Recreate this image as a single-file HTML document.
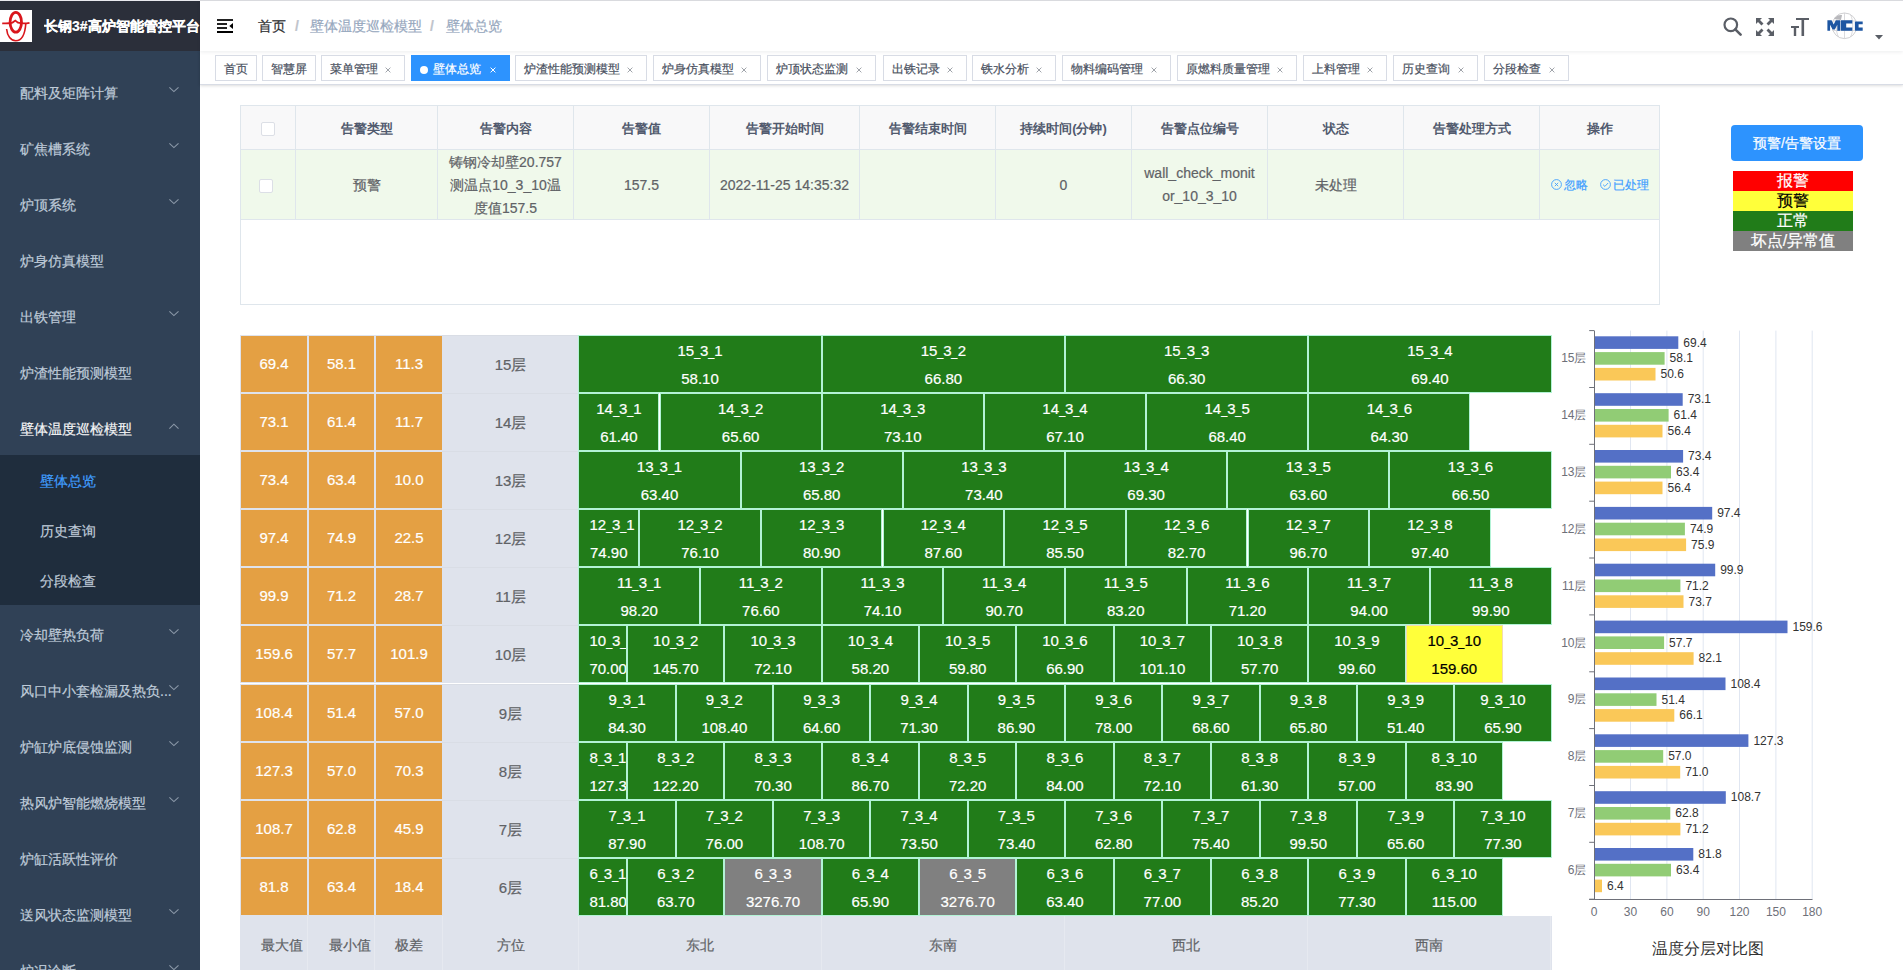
<!DOCTYPE html><html><head><meta charset="utf-8"><style>
*{box-sizing:border-box;margin:0;padding:0}
html,body{width:1903px;height:970px;overflow:hidden;background:#fff;font-family:"Liberation Sans", sans-serif;-webkit-text-stroke:0.2px}
.abs{position:absolute}
.topline{position:absolute;left:200px;top:0;width:1703px;height:1px;background:#d9dade;z-index:50}
.topline2{position:absolute;left:0;top:0;width:200px;height:1px;background:#e9e9ee;z-index:50}
#side{position:absolute;left:0;top:0;width:200px;height:970px;background:#304156;overflow:hidden}
#logo{position:absolute;left:0;top:0;width:200px;height:51px;background:#2b2f3a}
#logo .sq{position:absolute;left:0;top:10px;width:32px;height:32px;background:#fff}
#logo .t{position:absolute;left:44px;top:16px;height:20px;line-height:20px;font-size:14px;font-weight:bold;color:#fff;white-space:nowrap;width:156px;overflow:hidden}
.mi{position:absolute;left:0;width:200px;height:56px;line-height:60px;font-size:14px;color:#bfcbd9;padding-left:20px;white-space:nowrap}
.mi .arr{position:absolute;left:169px;top:23px;width:10px;height:7px}
.sub{position:absolute;left:0;top:455px;width:200px;height:150px;background:#1f2d3d}
.si{position:absolute;left:0;width:200px;height:50px;line-height:53px;font-size:14px;color:#bfcbd9;padding-left:40px}
#nav{position:absolute;left:200px;top:0;width:1703px;height:51px;background:#fff;box-shadow:0 1px 4px rgba(0,21,41,.08);z-index:10}
.bc{position:absolute;top:16px;height:20px;line-height:20px;font-size:14px;white-space:nowrap}
#tags{position:absolute;left:200px;top:51px;width:1703px;height:34px;background:#fff;border-bottom:1px solid #d8dce5;box-shadow:0 1px 3px 0 rgba(0,0,0,.12),0 0 3px 0 rgba(0,0,0,.04)}
.tag{position:absolute;top:4px;height:26px;line-height:27px;border:1px solid #d8dce5;color:#495060;background:#fff;font-size:12px;padding:0 8px;white-space:nowrap}
.tag .x{position:absolute;top:10.5px;width:6px;height:6px}
.tag.act{background:#2d93fe;border-color:#2d93fe;color:#fff}

.tag.act .dot{position:absolute;left:8px;top:10px;width:8px;height:8px;border-radius:50%;background:#fff}
.tag.act .tt{position:absolute;left:21px;top:0}
table{border-collapse:collapse}
#at{position:absolute;left:240px;top:105px;width:1420px;height:200px;border:1px solid #dfe6ec}
.ath{position:absolute;top:0;height:44px;line-height:45px;font-size:13px;font-weight:bold;-webkit-text-stroke:0;color:#515a6e;text-align:center;background:#f8f8f9;border-right:1px solid #dfe6ec;border-bottom:1px solid #dfe6ec}
.atd{position:absolute;top:44px;height:70px;font-size:14px;color:#606266;text-align:center;background:#f0f9eb;border-right:1px solid #dfe6ec;border-bottom:1px solid #dfe6ec;display:flex;align-items:center;justify-content:center;line-height:23px;padding:1px 10px 0;word-break:break-all}
.cb{position:absolute;width:14px;height:14px;border:1px solid #dcdfe6;border-radius:2px;background:#fff}
#btn{position:absolute;left:1731px;top:125px;width:132px;height:36px;border-radius:4px;background:#2d93fe;color:#fff;font-size:14px;text-align:center;line-height:36px}
.lg{position:absolute;left:1733px;width:120px;height:20px;line-height:20px;text-align:center;font-size:16px;color:#fff}
.row{position:absolute;left:240px;width:1311px;height:58.1px}
.oc{position:absolute;top:1px;height:56.1px;line-height:56px;background:#e4a043;color:#fff;font-size:15px;text-align:center}
.lc{position:absolute;top:0;height:58.1px;line-height:58px;background:#dfe3ec;color:#606266;font-size:15px;text-align:center;border-top:1px solid #d9dde5}
.gc{position:absolute;top:0;height:58.1px;border:1px solid #b3f3d6;background:#217c19;color:#fff;font-size:15px;text-align:center;line-height:28px;overflow:hidden;white-space:nowrap;padding:1px 10px 0}
.u{display:inline-block;transform:scaleX(.72);margin:0 -1.2px}
.gc.y{background:#ffff3a;color:#000;border-color:#f3dcb0}
.gc.g{background:#808080}
#foot{position:absolute;left:240px;top:916px;width:1312px;height:54px;background:#dfe3ec}
.fc{position:absolute;top:0;height:54px;line-height:58px;color:#606266;font-size:14px;border-right:1px solid #e6e9f0;white-space:nowrap;overflow:hidden}
</style></head><body>
<div class="topline"></div><div class="topline2"></div>
<div id="side">
<div id="logo"><div class="sq"><svg width="32" height="32" viewBox="0 0 32 32"><ellipse cx="15.8" cy="12.3" rx="5.7" ry="9.9" fill="none" stroke="#d9161c" stroke-width="2.8"/><path d="M2.2 13.3 C6 13.6,9 13.6,12.5 12.6 L15.3 10.6 L18 12.6 C21.5 13.6,25 13.6,29.5 12.8" fill="none" stroke="#d9161c" stroke-width="1.8"/><path d="M6.6 19 C7.2 26,11 30.8,15.7 30.8 C21 30.8,25 25,25.8 13.5" fill="none" stroke="#d9161c" stroke-width="1.6"/></svg></div><div class="t">长钢3#高炉智能管控平台</div></div>
<div class="mi" style="top:63px">配料及矩阵计算<svg class="arr" viewBox="0 0 10 7"><path d="M0.4 1.3 L4.9 5.6 L9.5 1.3" fill="none" stroke="#8b98a8" stroke-width="1.1"/></svg></div>
<div class="mi" style="top:119px">矿焦槽系统<svg class="arr" viewBox="0 0 10 7"><path d="M0.4 1.3 L4.9 5.6 L9.5 1.3" fill="none" stroke="#8b98a8" stroke-width="1.1"/></svg></div>
<div class="mi" style="top:175px">炉顶系统<svg class="arr" viewBox="0 0 10 7"><path d="M0.4 1.3 L4.9 5.6 L9.5 1.3" fill="none" stroke="#8b98a8" stroke-width="1.1"/></svg></div>
<div class="mi" style="top:231px">炉身仿真模型</div>
<div class="mi" style="top:287px">出铁管理<svg class="arr" viewBox="0 0 10 7"><path d="M0.4 1.3 L4.9 5.6 L9.5 1.3" fill="none" stroke="#8b98a8" stroke-width="1.1"/></svg></div>
<div class="mi" style="top:343px">炉渣性能预测模型</div>
<div class="mi" style="top:399px;color:#f4f4f5">壁体温度巡检模型<svg class="arr" style="top:24px" viewBox="0 0 10 7"><path d="M0.4 5.6 L4.9 1.2 L9.5 5.6" fill="none" stroke="#8b98a8" stroke-width="1.1"/></svg></div>
<div class="sub">
<div class="si" style="top:0px;color:#409eff">壁体总览</div>
<div class="si" style="top:50px;">历史查询</div>
<div class="si" style="top:100px;">分段检查</div>
</div>
<div class="mi" style="top:605px">冷却壁热负荷<svg class="arr" viewBox="0 0 10 7"><path d="M0.4 1.3 L4.9 5.6 L9.5 1.3" fill="none" stroke="#8b98a8" stroke-width="1.1"/></svg></div>
<div class="mi" style="top:661px">风口中小套检漏及热负...<svg class="arr" viewBox="0 0 10 7"><path d="M0.4 1.3 L4.9 5.6 L9.5 1.3" fill="none" stroke="#8b98a8" stroke-width="1.1"/></svg></div>
<div class="mi" style="top:717px">炉缸炉底侵蚀监测<svg class="arr" viewBox="0 0 10 7"><path d="M0.4 1.3 L4.9 5.6 L9.5 1.3" fill="none" stroke="#8b98a8" stroke-width="1.1"/></svg></div>
<div class="mi" style="top:773px">热风炉智能燃烧模型<svg class="arr" viewBox="0 0 10 7"><path d="M0.4 1.3 L4.9 5.6 L9.5 1.3" fill="none" stroke="#8b98a8" stroke-width="1.1"/></svg></div>
<div class="mi" style="top:829px">炉缸活跃性评价</div>
<div class="mi" style="top:885px">送风状态监测模型<svg class="arr" viewBox="0 0 10 7"><path d="M0.4 1.3 L4.9 5.6 L9.5 1.3" fill="none" stroke="#8b98a8" stroke-width="1.1"/></svg></div>
<div class="mi" style="top:941px">炉况诊断<svg class="arr" viewBox="0 0 10 7"><path d="M0.4 1.3 L4.9 5.6 L9.5 1.3" fill="none" stroke="#8b98a8" stroke-width="1.1"/></svg></div>
</div>
<div id="nav">
<svg class="abs" style="left:17px;top:19px" width="16" height="14" viewBox="0 0 16 14"><rect x="0" y="0" width="16" height="2" fill="#222"/><rect x="0" y="4" width="10" height="2" fill="#222"/><rect x="0" y="8" width="10" height="2" fill="#222"/><rect x="0" y="12" width="16" height="2" fill="#000"/><path d="M16 4 L16 10 L12.3 7 Z" fill="#000"/></svg>
<div class="bc" style="left:58px;color:#303133">首页</div>
<div class="bc" style="left:95px;color:#c0c4cc;font-weight:bold">/</div>
<div class="bc" style="left:110px;color:#97a8be">壁体温度巡检模型</div>
<div class="bc" style="left:230px;color:#c0c4cc;font-weight:bold">/</div>
<div class="bc" style="left:246px;color:#97a8be">壁体总览</div>
<svg class="abs" style="left:1523px;top:17px" width="19" height="19" viewBox="0 0 19 19"><circle cx="7.8" cy="7.8" r="6.3" fill="none" stroke="#5a5e66" stroke-width="2.2"/><path d="M12.3 12.3 L17.6 17.6" stroke="#5a5e66" stroke-width="2.6" stroke-linecap="round"/></svg>
<svg class="abs" style="left:1556px;top:18px" width="19" height="19" viewBox="0 0 19 19" fill="#5a5e66"><path d="M0 0 L6 0 L4 2 L7.5 5.5 L5.5 7.5 L2 4 L0 6 Z"/><path d="M18 0 L18 6 L16 4 L12.5 7.5 L10.5 5.5 L14 2 L12 0 Z"/><path d="M0 18 L0 12 L2 14 L5.5 10.5 L7.5 12.5 L4 16 L6 18 Z"/><path d="M18 18 L12 18 L14 16 L10.5 12.5 L12.5 10.5 L16 14 L18 12 Z"/></svg>
<svg class="abs" style="left:1591px;top:18px" width="19" height="19" viewBox="0 0 19 19" fill="#5a5e66"><rect x="5" y="0" width="13" height="2"/><rect x="10.5" y="0" width="2.6" height="18"/><rect x="0" y="8" width="8" height="2"/><rect x="2.8" y="8" width="2.4" height="10"/></svg>
<svg class="abs" style="left:1626px;top:12px" width="38" height="28" viewBox="1826 12 38 28"><ellipse cx="1844.5" cy="25.8" rx="12.4" ry="12.8" fill="#fff" stroke="#c9c9cc" stroke-width="0.9"/><path d="M1833 21 H1856 M1832.5 30.5 H1856.5 M1844.5 13 V38.6 M1838.5 14.5 C1835.5 20,1835.5 32,1838.5 37 M1850.5 14.5 C1853.5 20,1853.5 32,1850.5 37" stroke="#d0d0d4" stroke-width="0.8" fill="none"/><path d="M1834 19 C1836 16,1839 14.5,1842 15 L1841 20 Z" fill="#b8b8bc"/><g fill="#1d56a2"><path d="M1827.4 30.8 V20.2 H1831.6 L1833.7 24.6 L1835.8 20.2 H1840 V30.8 H1837.3 V24.8 L1834.8 29.6 H1832.6 L1830.1 24.8 V30.8 Z"/><path d="M1841.4 20.2 H1852.3 V23.6 H1846.2 V27.5 H1852.3 V30.8 H1841.4 Q1840.6 30.8,1840.6 30 V21 Q1840.6 20.2,1841.4 20.2 Z"/><path d="M1855.7 21.5 H1862.7 V24.3 H1858.6 V27.5 H1862.7 V30.8 H1855.7 Q1854.9 30.8,1854.9 30 V22.3 Q1854.9 21.5,1855.7 21.5 Z"/></g></svg>
<svg class="abs" style="left:1675px;top:35px" width="8" height="5" viewBox="0 0 8 5"><path d="M0 0 L8 0 L4 4.5 Z" fill="#5a5e66"/></svg>
</div>
<div id="tags">
<div class="tag" style="left:15px;width:42px">首页</div>
<div class="tag" style="left:62px;width:54px">智慧屏</div>
<div class="tag" style="left:121px;width:84px">菜单管理<svg class="x" style="left:63.2px" viewBox="0 0 6 6"><path d="M0.6 0.6 L5.4 5.4 M5.4 0.6 L0.6 5.4" stroke="#a0a4ab" stroke-width="1"/></svg></div>
<div class="tag act" style="left:211px;width:99px"><span class="dot"></span><span class="tt">壁体总览</span><svg class="x" style="left:78.2px" viewBox="0 0 6 6"><path d="M0.6 0.6 L5.4 5.4 M5.4 0.6 L0.6 5.4" stroke="#fff" stroke-width="1"/></svg></div>
<div class="tag" style="left:315px;width:132px">炉渣性能预测模型<svg class="x" style="left:111.2px" viewBox="0 0 6 6"><path d="M0.6 0.6 L5.4 5.4 M5.4 0.6 L0.6 5.4" stroke="#a0a4ab" stroke-width="1"/></svg></div>
<div class="tag" style="left:453px;width:108px">炉身仿真模型<svg class="x" style="left:87.2px" viewBox="0 0 6 6"><path d="M0.6 0.6 L5.4 5.4 M5.4 0.6 L0.6 5.4" stroke="#a0a4ab" stroke-width="1"/></svg></div>
<div class="tag" style="left:567px;width:109px">炉顶状态监测<svg class="x" style="left:88.2px" viewBox="0 0 6 6"><path d="M0.6 0.6 L5.4 5.4 M5.4 0.6 L0.6 5.4" stroke="#a0a4ab" stroke-width="1"/></svg></div>
<div class="tag" style="left:683px;width:84px">出铁记录<svg class="x" style="left:63.2px" viewBox="0 0 6 6"><path d="M0.6 0.6 L5.4 5.4 M5.4 0.6 L0.6 5.4" stroke="#a0a4ab" stroke-width="1"/></svg></div>
<div class="tag" style="left:772px;width:84px">铁水分析<svg class="x" style="left:63.2px" viewBox="0 0 6 6"><path d="M0.6 0.6 L5.4 5.4 M5.4 0.6 L0.6 5.4" stroke="#a0a4ab" stroke-width="1"/></svg></div>
<div class="tag" style="left:862px;width:109px">物料编码管理<svg class="x" style="left:88.2px" viewBox="0 0 6 6"><path d="M0.6 0.6 L5.4 5.4 M5.4 0.6 L0.6 5.4" stroke="#a0a4ab" stroke-width="1"/></svg></div>
<div class="tag" style="left:977px;width:120px">原燃料质量管理<svg class="x" style="left:99.2px" viewBox="0 0 6 6"><path d="M0.6 0.6 L5.4 5.4 M5.4 0.6 L0.6 5.4" stroke="#a0a4ab" stroke-width="1"/></svg></div>
<div class="tag" style="left:1103px;width:84px">上料管理<svg class="x" style="left:63.2px" viewBox="0 0 6 6"><path d="M0.6 0.6 L5.4 5.4 M5.4 0.6 L0.6 5.4" stroke="#a0a4ab" stroke-width="1"/></svg></div>
<div class="tag" style="left:1193px;width:85px">历史查询<svg class="x" style="left:64.2px" viewBox="0 0 6 6"><path d="M0.6 0.6 L5.4 5.4 M5.4 0.6 L0.6 5.4" stroke="#a0a4ab" stroke-width="1"/></svg></div>
<div class="tag" style="left:1284px;width:85px">分段检查<svg class="x" style="left:64.2px" viewBox="0 0 6 6"><path d="M0.6 0.6 L5.4 5.4 M5.4 0.6 L0.6 5.4" stroke="#a0a4ab" stroke-width="1"/></svg></div>
</div>
<div id="at">
<div class="ath" style="left:0px;width:55px"></div>
<div class="atd" style="left:0px;width:55px"></div>
<div class="ath" style="left:55px;width:142px">告警类型</div>
<div class="atd" style="left:55px;width:142px">预警</div>
<div class="ath" style="left:197px;width:136px">告警内容</div>
<div class="atd" style="left:197px;width:136px">铸钢冷却壁20.757测温点10_3_10温度值157.5</div>
<div class="ath" style="left:333px;width:136px">告警值</div>
<div class="atd" style="left:333px;width:136px">157.5</div>
<div class="ath" style="left:469px;width:150px">告警开始时间</div>
<div class="atd" style="left:469px;width:150px">2022-11-25 14:35:32</div>
<div class="ath" style="left:619px;width:136px">告警结束时间</div>
<div class="atd" style="left:619px;width:136px"></div>
<div class="ath" style="left:755px;width:136px">持续时间(分钟)</div>
<div class="atd" style="left:755px;width:136px">0</div>
<div class="ath" style="left:891px;width:136px">告警点位编号</div>
<div class="atd" style="left:891px;width:136px">wall_check_monitor_10_3_10</div>
<div class="ath" style="left:1027px;width:136px">状态</div>
<div class="atd" style="left:1027px;width:136px">未处理</div>
<div class="ath" style="left:1163px;width:136px">告警处理方式</div>
<div class="atd" style="left:1163px;width:136px"></div>
<div class="ath" style="left:1299px;width:120px">操作</div>
<div class="atd" style="left:1299px;width:120px"><span style="color:#409eff;font-size:12px;white-space:nowrap"><svg width="11" height="11" viewBox="0 0 11 11" style="vertical-align:-1px;margin-right:2px"><circle cx="5.5" cy="5.5" r="4.9" fill="none" stroke="#409eff" stroke-width="0.9"/><path d="M3.8 3.8 L7.2 7.2 M7.2 3.8 L3.8 7.2" stroke="#409eff" stroke-width="0.9"/></svg>忽略<span style="display:inline-block;width:12px"></span><svg width="11" height="11" viewBox="0 0 11 11" style="vertical-align:-1px;margin-right:2px"><circle cx="5.5" cy="5.5" r="4.9" fill="none" stroke="#409eff" stroke-width="0.9"/><path d="M3 5.6 L4.9 7.4 L8.1 4" fill="none" stroke="#409eff" stroke-width="0.9"/></svg>已处理</span></div>
<div class="cb" style="left:20px;top:16px"></div>
<div class="cb" style="left:18px;top:73px"></div>
</div>
<div id="btn">预警/告警设置</div>
<div class="lg" style="top:171px;background:#f00">报警</div>
<div class="lg" style="top:191px;background:#ffff3a;color:#000">预警</div>
<div class="lg" style="top:211px;background:#217c19">正常</div>
<div class="lg" style="top:231px;background:#808080">坏点/异常值</div>
<div class="row" style="top:334.90px">
<div class="abs" style="left:0;top:0;width:202px;height:58px;background:#dfe3ec"></div>
<div class="oc" style="left:1px;width:66px">69.4</div>
<div class="oc" style="left:69px;width:65px">58.1</div>
<div class="oc" style="left:136px;width:66px">11.3</div>
<div class="lc" style="left:202px;width:137px">15层</div>
<div class="gc" style="left:338.4px;width:243.3px">15<span class="u">_</span>3<span class="u">_</span>1<br>58.10</div>
<div class="gc" style="left:581.7px;width:243.3px">15<span class="u">_</span>3<span class="u">_</span>2<br>66.80</div>
<div class="gc" style="left:825.0px;width:243.3px">15<span class="u">_</span>3<span class="u">_</span>3<br>66.30</div>
<div class="gc" style="left:1068.3px;width:243.3px">15<span class="u">_</span>3<span class="u">_</span>4<br>69.40</div>
</div>
<div class="row" style="top:393.00px">
<div class="abs" style="left:0;top:0;width:202px;height:58px;background:#dfe3ec"></div>
<div class="oc" style="left:1px;width:66px">73.1</div>
<div class="oc" style="left:69px;width:65px">61.4</div>
<div class="oc" style="left:136px;width:66px">11.7</div>
<div class="lc" style="left:202px;width:137px">14层</div>
<div class="gc" style="left:338.4px;width:81.1px">14<span class="u">_</span>3<span class="u">_</span>1<br>61.40</div>
<div class="gc" style="left:419.5px;width:162.2px">14<span class="u">_</span>3<span class="u">_</span>2<br>65.60</div>
<div class="gc" style="left:581.7px;width:162.2px">14<span class="u">_</span>3<span class="u">_</span>3<br>73.10</div>
<div class="gc" style="left:743.9px;width:162.2px">14<span class="u">_</span>3<span class="u">_</span>4<br>67.10</div>
<div class="gc" style="left:906.1px;width:162.2px">14<span class="u">_</span>3<span class="u">_</span>5<br>68.40</div>
<div class="gc" style="left:1068.3px;width:162.2px">14<span class="u">_</span>3<span class="u">_</span>6<br>64.30</div>
</div>
<div class="row" style="top:451.10px">
<div class="abs" style="left:0;top:0;width:202px;height:58px;background:#dfe3ec"></div>
<div class="oc" style="left:1px;width:66px">73.4</div>
<div class="oc" style="left:69px;width:65px">63.4</div>
<div class="oc" style="left:136px;width:66px">10.0</div>
<div class="lc" style="left:202px;width:137px">13层</div>
<div class="gc" style="left:338.4px;width:162.2px">13<span class="u">_</span>3<span class="u">_</span>1<br>63.40</div>
<div class="gc" style="left:500.6px;width:162.2px">13<span class="u">_</span>3<span class="u">_</span>2<br>65.80</div>
<div class="gc" style="left:662.8px;width:162.2px">13<span class="u">_</span>3<span class="u">_</span>3<br>73.40</div>
<div class="gc" style="left:825.0px;width:162.2px">13<span class="u">_</span>3<span class="u">_</span>4<br>69.30</div>
<div class="gc" style="left:987.2px;width:162.2px">13<span class="u">_</span>3<span class="u">_</span>5<br>63.60</div>
<div class="gc" style="left:1149.4px;width:162.2px">13<span class="u">_</span>3<span class="u">_</span>6<br>66.50</div>
</div>
<div class="row" style="top:509.20px">
<div class="abs" style="left:0;top:0;width:202px;height:58px;background:#dfe3ec"></div>
<div class="oc" style="left:1px;width:66px">97.4</div>
<div class="oc" style="left:69px;width:65px">74.9</div>
<div class="oc" style="left:136px;width:66px">22.5</div>
<div class="lc" style="left:202px;width:137px">12层</div>
<div class="gc" style="left:338.4px;width:60.8px">12<span class="u">_</span>3<span class="u">_</span>1<br>74.90</div>
<div class="gc" style="left:399.2px;width:121.7px">12<span class="u">_</span>3<span class="u">_</span>2<br>76.10</div>
<div class="gc" style="left:520.9px;width:121.6px">12<span class="u">_</span>3<span class="u">_</span>3<br>80.90</div>
<div class="gc" style="left:642.5px;width:121.6px">12<span class="u">_</span>3<span class="u">_</span>4<br>87.60</div>
<div class="gc" style="left:764.2px;width:121.7px">12<span class="u">_</span>3<span class="u">_</span>5<br>85.50</div>
<div class="gc" style="left:885.8px;width:121.6px">12<span class="u">_</span>3<span class="u">_</span>6<br>82.70</div>
<div class="gc" style="left:1007.5px;width:121.6px">12<span class="u">_</span>3<span class="u">_</span>7<br>96.70</div>
<div class="gc" style="left:1129.1px;width:121.7px">12<span class="u">_</span>3<span class="u">_</span>8<br>97.40</div>
</div>
<div class="row" style="top:567.30px">
<div class="abs" style="left:0;top:0;width:202px;height:58px;background:#dfe3ec"></div>
<div class="oc" style="left:1px;width:66px">99.9</div>
<div class="oc" style="left:69px;width:65px">71.2</div>
<div class="oc" style="left:136px;width:66px">28.7</div>
<div class="lc" style="left:202px;width:137px">11层</div>
<div class="gc" style="left:338.4px;width:121.6px">11<span class="u">_</span>3<span class="u">_</span>1<br>98.20</div>
<div class="gc" style="left:460.0px;width:121.7px">11<span class="u">_</span>3<span class="u">_</span>2<br>76.60</div>
<div class="gc" style="left:581.7px;width:121.6px">11<span class="u">_</span>3<span class="u">_</span>3<br>74.10</div>
<div class="gc" style="left:703.4px;width:121.6px">11<span class="u">_</span>3<span class="u">_</span>4<br>90.70</div>
<div class="gc" style="left:825.0px;width:121.6px">11<span class="u">_</span>3<span class="u">_</span>5<br>83.20</div>
<div class="gc" style="left:946.6px;width:121.7px">11<span class="u">_</span>3<span class="u">_</span>6<br>71.20</div>
<div class="gc" style="left:1068.3px;width:121.6px">11<span class="u">_</span>3<span class="u">_</span>7<br>94.00</div>
<div class="gc" style="left:1190.0px;width:121.6px">11<span class="u">_</span>3<span class="u">_</span>8<br>99.90</div>
</div>
<div class="row" style="top:625.40px">
<div class="abs" style="left:0;top:0;width:202px;height:58px;background:#dfe3ec"></div>
<div class="oc" style="left:1px;width:66px">159.6</div>
<div class="oc" style="left:69px;width:65px">57.7</div>
<div class="oc" style="left:136px;width:66px">101.9</div>
<div class="lc" style="left:202px;width:137px">10层</div>
<div class="gc" style="left:338.4px;width:48.7px">10<span class="u">_</span>3<span class="u">_</span>1<br>70.00</div>
<div class="gc" style="left:387.1px;width:97.3px">10<span class="u">_</span>3<span class="u">_</span>2<br>145.70</div>
<div class="gc" style="left:484.4px;width:97.3px">10<span class="u">_</span>3<span class="u">_</span>3<br>72.10</div>
<div class="gc" style="left:581.7px;width:97.3px">10<span class="u">_</span>3<span class="u">_</span>4<br>58.20</div>
<div class="gc" style="left:679.0px;width:97.3px">10<span class="u">_</span>3<span class="u">_</span>5<br>59.80</div>
<div class="gc" style="left:776.3px;width:97.3px">10<span class="u">_</span>3<span class="u">_</span>6<br>66.90</div>
<div class="gc" style="left:873.7px;width:97.3px">10<span class="u">_</span>3<span class="u">_</span>7<br>101.10</div>
<div class="gc" style="left:971.0px;width:97.3px">10<span class="u">_</span>3<span class="u">_</span>8<br>57.70</div>
<div class="gc" style="left:1068.3px;width:97.3px">10<span class="u">_</span>3<span class="u">_</span>9<br>99.60</div>
<div class="gc y" style="left:1165.6px;width:97.3px">10<span class="u">_</span>3<span class="u">_</span>10<br>159.60</div>
</div>
<div class="row" style="top:683.50px">
<div class="abs" style="left:0;top:0;width:202px;height:58px;background:#dfe3ec"></div>
<div class="oc" style="left:1px;width:66px">108.4</div>
<div class="oc" style="left:69px;width:65px">51.4</div>
<div class="oc" style="left:136px;width:66px">57.0</div>
<div class="lc" style="left:202px;width:137px">9层</div>
<div class="gc" style="left:338.4px;width:97.3px">9<span class="u">_</span>3<span class="u">_</span>1<br>84.30</div>
<div class="gc" style="left:435.7px;width:97.3px">9<span class="u">_</span>3<span class="u">_</span>2<br>108.40</div>
<div class="gc" style="left:533.0px;width:97.3px">9<span class="u">_</span>3<span class="u">_</span>3<br>64.60</div>
<div class="gc" style="left:630.4px;width:97.3px">9<span class="u">_</span>3<span class="u">_</span>4<br>71.30</div>
<div class="gc" style="left:727.7px;width:97.3px">9<span class="u">_</span>3<span class="u">_</span>5<br>86.90</div>
<div class="gc" style="left:825.0px;width:97.3px">9<span class="u">_</span>3<span class="u">_</span>6<br>78.00</div>
<div class="gc" style="left:922.3px;width:97.3px">9<span class="u">_</span>3<span class="u">_</span>7<br>68.60</div>
<div class="gc" style="left:1019.6px;width:97.3px">9<span class="u">_</span>3<span class="u">_</span>8<br>65.80</div>
<div class="gc" style="left:1117.0px;width:97.3px">9<span class="u">_</span>3<span class="u">_</span>9<br>51.40</div>
<div class="gc" style="left:1214.3px;width:97.3px">9<span class="u">_</span>3<span class="u">_</span>10<br>65.90</div>
</div>
<div class="row" style="top:741.60px">
<div class="abs" style="left:0;top:0;width:202px;height:58px;background:#dfe3ec"></div>
<div class="oc" style="left:1px;width:66px">127.3</div>
<div class="oc" style="left:69px;width:65px">57.0</div>
<div class="oc" style="left:136px;width:66px">70.3</div>
<div class="lc" style="left:202px;width:137px">8层</div>
<div class="gc" style="left:338.4px;width:48.7px">8<span class="u">_</span>3<span class="u">_</span>1<br>127.30</div>
<div class="gc" style="left:387.1px;width:97.3px">8<span class="u">_</span>3<span class="u">_</span>2<br>122.20</div>
<div class="gc" style="left:484.4px;width:97.3px">8<span class="u">_</span>3<span class="u">_</span>3<br>70.30</div>
<div class="gc" style="left:581.7px;width:97.3px">8<span class="u">_</span>3<span class="u">_</span>4<br>86.70</div>
<div class="gc" style="left:679.0px;width:97.3px">8<span class="u">_</span>3<span class="u">_</span>5<br>72.20</div>
<div class="gc" style="left:776.3px;width:97.3px">8<span class="u">_</span>3<span class="u">_</span>6<br>84.00</div>
<div class="gc" style="left:873.7px;width:97.3px">8<span class="u">_</span>3<span class="u">_</span>7<br>72.10</div>
<div class="gc" style="left:971.0px;width:97.3px">8<span class="u">_</span>3<span class="u">_</span>8<br>61.30</div>
<div class="gc" style="left:1068.3px;width:97.3px">8<span class="u">_</span>3<span class="u">_</span>9<br>57.00</div>
<div class="gc" style="left:1165.6px;width:97.3px">8<span class="u">_</span>3<span class="u">_</span>10<br>83.90</div>
</div>
<div class="row" style="top:799.70px">
<div class="abs" style="left:0;top:0;width:202px;height:58px;background:#dfe3ec"></div>
<div class="oc" style="left:1px;width:66px">108.7</div>
<div class="oc" style="left:69px;width:65px">62.8</div>
<div class="oc" style="left:136px;width:66px">45.9</div>
<div class="lc" style="left:202px;width:137px">7层</div>
<div class="gc" style="left:338.4px;width:97.3px">7<span class="u">_</span>3<span class="u">_</span>1<br>87.90</div>
<div class="gc" style="left:435.7px;width:97.3px">7<span class="u">_</span>3<span class="u">_</span>2<br>76.00</div>
<div class="gc" style="left:533.0px;width:97.3px">7<span class="u">_</span>3<span class="u">_</span>3<br>108.70</div>
<div class="gc" style="left:630.4px;width:97.3px">7<span class="u">_</span>3<span class="u">_</span>4<br>73.50</div>
<div class="gc" style="left:727.7px;width:97.3px">7<span class="u">_</span>3<span class="u">_</span>5<br>73.40</div>
<div class="gc" style="left:825.0px;width:97.3px">7<span class="u">_</span>3<span class="u">_</span>6<br>62.80</div>
<div class="gc" style="left:922.3px;width:97.3px">7<span class="u">_</span>3<span class="u">_</span>7<br>75.40</div>
<div class="gc" style="left:1019.6px;width:97.3px">7<span class="u">_</span>3<span class="u">_</span>8<br>99.50</div>
<div class="gc" style="left:1117.0px;width:97.3px">7<span class="u">_</span>3<span class="u">_</span>9<br>65.60</div>
<div class="gc" style="left:1214.3px;width:97.3px">7<span class="u">_</span>3<span class="u">_</span>10<br>77.30</div>
</div>
<div class="row" style="top:857.80px">
<div class="abs" style="left:0;top:0;width:202px;height:58px;background:#dfe3ec"></div>
<div class="oc" style="left:1px;width:66px">81.8</div>
<div class="oc" style="left:69px;width:65px">63.4</div>
<div class="oc" style="left:136px;width:66px">18.4</div>
<div class="lc" style="left:202px;width:137px">6层</div>
<div class="gc" style="left:338.4px;width:48.7px">6<span class="u">_</span>3<span class="u">_</span>1<br>81.80</div>
<div class="gc" style="left:387.1px;width:97.3px">6<span class="u">_</span>3<span class="u">_</span>2<br>63.70</div>
<div class="gc g" style="left:484.4px;width:97.3px">6<span class="u">_</span>3<span class="u">_</span>3<br>3276.70</div>
<div class="gc" style="left:581.7px;width:97.3px">6<span class="u">_</span>3<span class="u">_</span>4<br>65.90</div>
<div class="gc g" style="left:679.0px;width:97.3px">6<span class="u">_</span>3<span class="u">_</span>5<br>3276.70</div>
<div class="gc" style="left:776.3px;width:97.3px">6<span class="u">_</span>3<span class="u">_</span>6<br>63.40</div>
<div class="gc" style="left:873.7px;width:97.3px">6<span class="u">_</span>3<span class="u">_</span>7<br>77.00</div>
<div class="gc" style="left:971.0px;width:97.3px">6<span class="u">_</span>3<span class="u">_</span>8<br>85.20</div>
<div class="gc" style="left:1068.3px;width:97.3px">6<span class="u">_</span>3<span class="u">_</span>9<br>77.30</div>
<div class="gc" style="left:1165.6px;width:97.3px">6<span class="u">_</span>3<span class="u">_</span>10<br>115.00</div>
</div>
<div id="foot">
<div class="fc" style="left:0px;width:68px;text-align:left;padding-left:21px">最大值</div>
<div class="fc" style="left:68px;width:67px;text-align:left;padding-left:21px">最小值</div>
<div class="fc" style="left:135px;width:68px;text-align:center">极差</div>
<div class="fc" style="left:203px;width:136px;text-align:center">方位</div>
<div class="fc" style="left:339px;width:243px;text-align:center">东北</div>
<div class="fc" style="left:582px;width:243px;text-align:center">东南</div>
<div class="fc" style="left:825px;width:243px;text-align:center">西北</div>
<div class="fc" style="left:1068px;width:243px;text-align:center">西南</div>
</div>
<svg class="abs" style="left:0;top:0" width="1903" height="970" viewBox="0 0 1903 970"><line x1="1630.5" y1="330.6" x2="1630.5" y2="899.2" stroke="#e0e6f1" stroke-width="1"/><line x1="1666.9" y1="330.6" x2="1666.9" y2="899.2" stroke="#e0e6f1" stroke-width="1"/><line x1="1703.2" y1="330.6" x2="1703.2" y2="899.2" stroke="#e0e6f1" stroke-width="1"/><line x1="1739.5" y1="330.6" x2="1739.5" y2="899.2" stroke="#e0e6f1" stroke-width="1"/><line x1="1775.9" y1="330.6" x2="1775.9" y2="899.2" stroke="#e0e6f1" stroke-width="1"/><line x1="1812.2" y1="330.6" x2="1812.2" y2="899.2" stroke="#e0e6f1" stroke-width="1"/><rect x="1594.2" y="336.3" width="84.1" height="12.6" fill="#5470c6"/><text x="1683.3" y="346.5" font-family="Liberation Sans" font-size="12" fill="#333">69.4</text><rect x="1594.2" y="352.1" width="70.4" height="12.6" fill="#91cc75"/><text x="1669.6" y="362.3" font-family="Liberation Sans" font-size="12" fill="#333">58.1</text><rect x="1594.2" y="367.9" width="61.3" height="12.6" fill="#fac858"/><text x="1660.5" y="378.1" font-family="Liberation Sans" font-size="12" fill="#333">50.6</text><text x="1586.5" y="362.2" text-anchor="end" font-family="Liberation Sans" font-size="12" fill="#6e7079">15层</text><rect x="1594.2" y="393.2" width="88.5" height="12.6" fill="#5470c6"/><text x="1687.7" y="403.4" font-family="Liberation Sans" font-size="12" fill="#333">73.1</text><rect x="1594.2" y="409.0" width="74.4" height="12.6" fill="#91cc75"/><text x="1673.6" y="419.2" font-family="Liberation Sans" font-size="12" fill="#333">61.4</text><rect x="1594.2" y="424.8" width="68.3" height="12.6" fill="#fac858"/><text x="1667.5" y="435.0" font-family="Liberation Sans" font-size="12" fill="#333">56.4</text><text x="1586.5" y="419.1" text-anchor="end" font-family="Liberation Sans" font-size="12" fill="#6e7079">14层</text><rect x="1594.2" y="450.0" width="88.9" height="12.6" fill="#5470c6"/><text x="1688.1" y="460.2" font-family="Liberation Sans" font-size="12" fill="#333">73.4</text><rect x="1594.2" y="465.8" width="76.8" height="12.6" fill="#91cc75"/><text x="1676.0" y="476.0" font-family="Liberation Sans" font-size="12" fill="#333">63.4</text><rect x="1594.2" y="481.6" width="68.3" height="12.6" fill="#fac858"/><text x="1667.5" y="491.8" font-family="Liberation Sans" font-size="12" fill="#333">56.4</text><text x="1586.5" y="476.0" text-anchor="end" font-family="Liberation Sans" font-size="12" fill="#6e7079">13层</text><rect x="1594.2" y="506.9" width="118.0" height="12.6" fill="#5470c6"/><text x="1717.2" y="517.1" font-family="Liberation Sans" font-size="12" fill="#333">97.4</text><rect x="1594.2" y="522.7" width="90.7" height="12.6" fill="#91cc75"/><text x="1689.9" y="532.9" font-family="Liberation Sans" font-size="12" fill="#333">74.9</text><rect x="1594.2" y="538.5" width="91.9" height="12.6" fill="#fac858"/><text x="1691.1" y="548.7" font-family="Liberation Sans" font-size="12" fill="#333">75.9</text><text x="1586.5" y="532.8" text-anchor="end" font-family="Liberation Sans" font-size="12" fill="#6e7079">12层</text><rect x="1594.2" y="563.7" width="121.0" height="12.6" fill="#5470c6"/><text x="1720.2" y="573.9" font-family="Liberation Sans" font-size="12" fill="#333">99.9</text><rect x="1594.2" y="579.5" width="86.2" height="12.6" fill="#91cc75"/><text x="1685.4" y="589.7" font-family="Liberation Sans" font-size="12" fill="#333">71.2</text><rect x="1594.2" y="595.3" width="89.3" height="12.6" fill="#fac858"/><text x="1688.5" y="605.5" font-family="Liberation Sans" font-size="12" fill="#333">73.7</text><text x="1586.5" y="589.7" text-anchor="end" font-family="Liberation Sans" font-size="12" fill="#6e7079">11层</text><rect x="1594.2" y="620.6" width="193.3" height="12.6" fill="#5470c6"/><text x="1792.5" y="630.8" font-family="Liberation Sans" font-size="12" fill="#333">159.6</text><rect x="1594.2" y="636.4" width="69.9" height="12.6" fill="#91cc75"/><text x="1669.1" y="646.6" font-family="Liberation Sans" font-size="12" fill="#333">57.7</text><rect x="1594.2" y="652.2" width="99.4" height="12.6" fill="#fac858"/><text x="1698.6" y="662.4" font-family="Liberation Sans" font-size="12" fill="#333">82.1</text><text x="1586.5" y="646.5" text-anchor="end" font-family="Liberation Sans" font-size="12" fill="#6e7079">10层</text><rect x="1594.2" y="677.5" width="131.3" height="12.6" fill="#5470c6"/><text x="1730.5" y="687.7" font-family="Liberation Sans" font-size="12" fill="#333">108.4</text><rect x="1594.2" y="693.3" width="62.3" height="12.6" fill="#91cc75"/><text x="1661.5" y="703.5" font-family="Liberation Sans" font-size="12" fill="#333">51.4</text><rect x="1594.2" y="709.1" width="80.1" height="12.6" fill="#fac858"/><text x="1679.3" y="719.3" font-family="Liberation Sans" font-size="12" fill="#333">66.1</text><text x="1586.5" y="703.4" text-anchor="end" font-family="Liberation Sans" font-size="12" fill="#6e7079">9层</text><rect x="1594.2" y="734.3" width="154.2" height="12.6" fill="#5470c6"/><text x="1753.4" y="744.5" font-family="Liberation Sans" font-size="12" fill="#333">127.3</text><rect x="1594.2" y="750.1" width="69.0" height="12.6" fill="#91cc75"/><text x="1668.2" y="760.3" font-family="Liberation Sans" font-size="12" fill="#333">57.0</text><rect x="1594.2" y="765.9" width="86.0" height="12.6" fill="#fac858"/><text x="1685.2" y="776.1" font-family="Liberation Sans" font-size="12" fill="#333">71.0</text><text x="1586.5" y="760.2" text-anchor="end" font-family="Liberation Sans" font-size="12" fill="#6e7079">8层</text><rect x="1594.2" y="791.2" width="131.6" height="12.6" fill="#5470c6"/><text x="1730.8" y="801.4" font-family="Liberation Sans" font-size="12" fill="#333">108.7</text><rect x="1594.2" y="807.0" width="76.1" height="12.6" fill="#91cc75"/><text x="1675.3" y="817.2" font-family="Liberation Sans" font-size="12" fill="#333">62.8</text><rect x="1594.2" y="822.8" width="86.2" height="12.6" fill="#fac858"/><text x="1685.4" y="833.0" font-family="Liberation Sans" font-size="12" fill="#333">71.2</text><text x="1586.5" y="817.1" text-anchor="end" font-family="Liberation Sans" font-size="12" fill="#6e7079">7层</text><rect x="1594.2" y="848.0" width="99.1" height="12.6" fill="#5470c6"/><text x="1698.3" y="858.2" font-family="Liberation Sans" font-size="12" fill="#333">81.8</text><rect x="1594.2" y="863.8" width="76.8" height="12.6" fill="#91cc75"/><text x="1676.0" y="874.0" font-family="Liberation Sans" font-size="12" fill="#333">63.4</text><rect x="1594.2" y="879.6" width="7.8" height="12.6" fill="#fac858"/><text x="1607.0" y="889.8" font-family="Liberation Sans" font-size="12" fill="#333">6.4</text><text x="1586.5" y="874.0" text-anchor="end" font-family="Liberation Sans" font-size="12" fill="#6e7079">6层</text><line x1="1594.5" y1="330.6" x2="1594.5" y2="899.5" stroke="#6e7079" stroke-width="1"/><line x1="1589.2" y1="330.6" x2="1594.2" y2="330.6" stroke="#6e7079" stroke-width="1"/><line x1="1589.2" y1="387.5" x2="1594.2" y2="387.5" stroke="#6e7079" stroke-width="1"/><line x1="1589.2" y1="444.3" x2="1594.2" y2="444.3" stroke="#6e7079" stroke-width="1"/><line x1="1589.2" y1="501.2" x2="1594.2" y2="501.2" stroke="#6e7079" stroke-width="1"/><line x1="1589.2" y1="558.0" x2="1594.2" y2="558.0" stroke="#6e7079" stroke-width="1"/><line x1="1589.2" y1="614.9" x2="1594.2" y2="614.9" stroke="#6e7079" stroke-width="1"/><line x1="1589.2" y1="671.8" x2="1594.2" y2="671.8" stroke="#6e7079" stroke-width="1"/><line x1="1589.2" y1="728.6" x2="1594.2" y2="728.6" stroke="#6e7079" stroke-width="1"/><line x1="1589.2" y1="785.5" x2="1594.2" y2="785.5" stroke="#6e7079" stroke-width="1"/><line x1="1589.2" y1="842.3" x2="1594.2" y2="842.3" stroke="#6e7079" stroke-width="1"/><line x1="1589.2" y1="899.2" x2="1594.2" y2="899.2" stroke="#6e7079" stroke-width="1"/><line x1="1589.2" y1="899.5" x2="1812.5" y2="899.5" stroke="#6e7079" stroke-width="1"/><text x="1594.2" y="915.5" text-anchor="middle" font-family="Liberation Sans" font-size="12" fill="#6e7079">0</text><text x="1630.5" y="915.5" text-anchor="middle" font-family="Liberation Sans" font-size="12" fill="#6e7079">30</text><text x="1666.9" y="915.5" text-anchor="middle" font-family="Liberation Sans" font-size="12" fill="#6e7079">60</text><text x="1703.2" y="915.5" text-anchor="middle" font-family="Liberation Sans" font-size="12" fill="#6e7079">90</text><text x="1739.5" y="915.5" text-anchor="middle" font-family="Liberation Sans" font-size="12" fill="#6e7079">120</text><text x="1775.9" y="915.5" text-anchor="middle" font-family="Liberation Sans" font-size="12" fill="#6e7079">150</text><text x="1812.2" y="915.5" text-anchor="middle" font-family="Liberation Sans" font-size="12" fill="#6e7079">180</text><text x="1707.5" y="954" text-anchor="middle" font-family="Liberation Sans" font-size="16" fill="#333">温度分层对比图</text></svg>
</body></html>
